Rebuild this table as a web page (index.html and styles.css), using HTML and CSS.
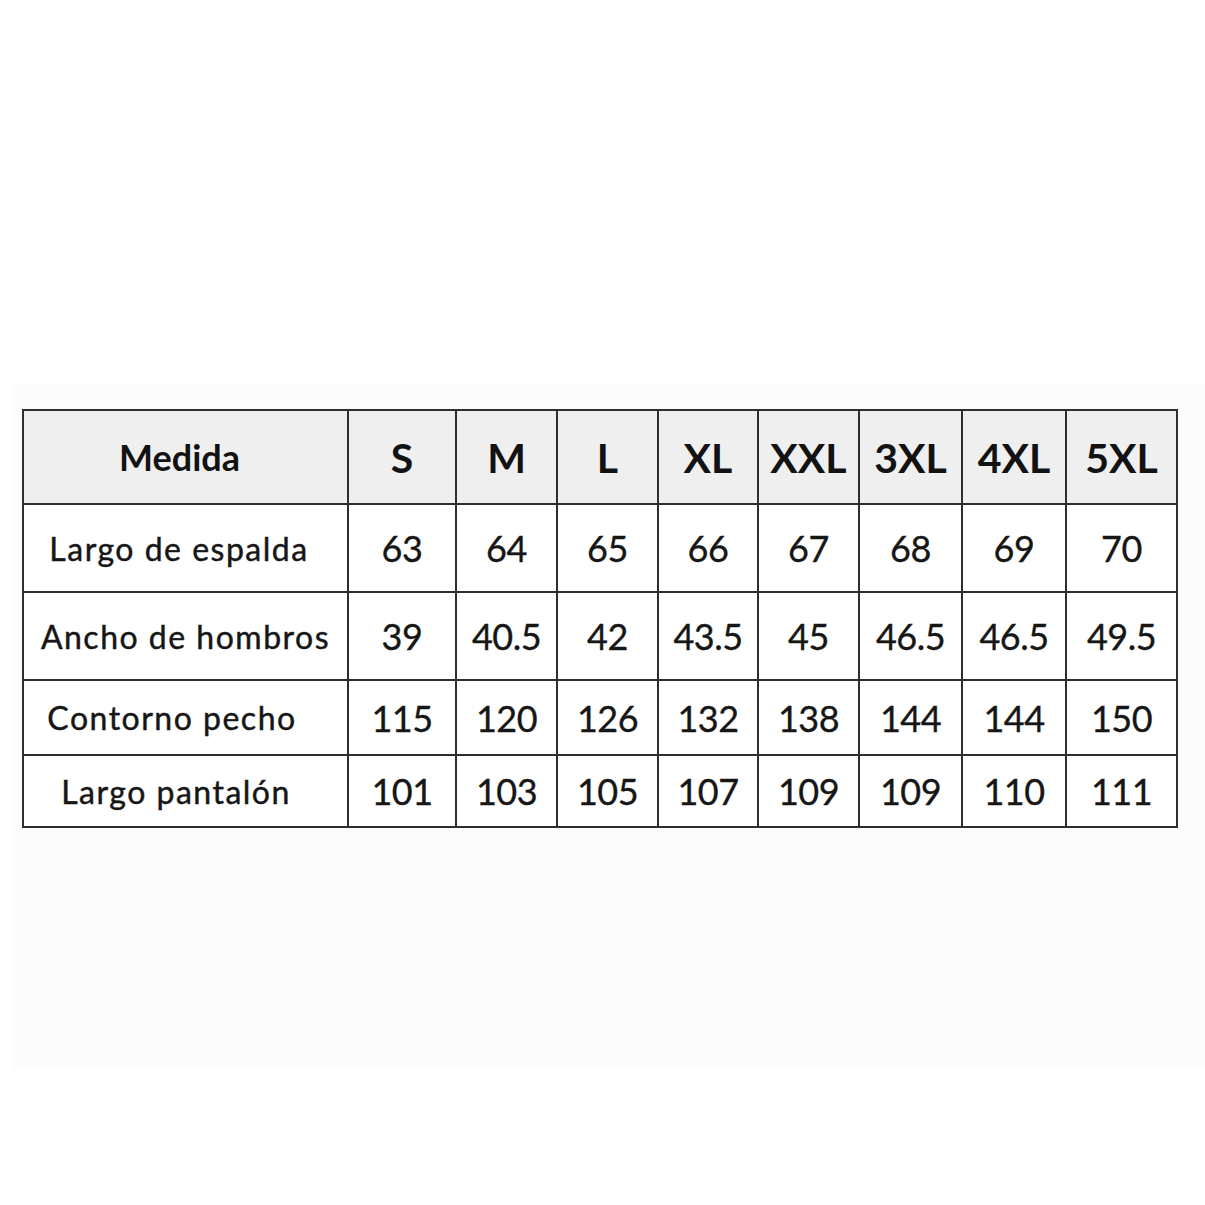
FILE: index.html
```html
<!DOCTYPE html>
<html lang="es">
<head>
<meta charset="utf-8">
<title>Tabla de medidas</title>
<link rel="stylesheet" href="styles.css">
</head>
<body>
<div class="panel">
  <table class="sizes">
    <colgroup>
      <col class="c-label">
      <col class="c-s">
      <col class="c-m">
      <col class="c-l">
      <col class="c-xl">
      <col class="c-xxl">
      <col class="c-3xl">
      <col class="c-4xl">
      <col class="c-5xl">
    </colgroup>
    <thead>
      <tr class="r-head">
        <th class="label-head">Medida</th>
        <th>S</th><th>M</th><th>L</th><th>XL</th><th>XXL</th><th>3XL</th><th>4XL</th><th>5XL</th>
      </tr>
    </thead>
    <tbody>
      <tr class="r-1">
        <td class="label label-back">Largo de espalda</td>
        <td>63</td><td>64</td><td>65</td><td>66</td><td>67</td><td>68</td><td>69</td><td>70</td>
      </tr>
      <tr class="r-2">
        <td class="label label-shoulder">Ancho de hombros</td>
        <td>39</td><td>40.5</td><td>42</td><td>43.5</td><td>45</td><td>46.5</td><td>46.5</td><td>49.5</td>
      </tr>
      <tr class="r-3">
        <td class="label label-chest">Contorno pecho</td>
        <td>115</td><td>120</td><td>126</td><td>132</td><td>138</td><td>144</td><td>144</td><td>150</td>
      </tr>
      <tr class="r-4">
        <td class="label label-pants">Largo pantalón</td>
        <td>101</td><td>103</td><td>105</td><td>107</td><td>109</td><td>109</td><td>110</td><td>111</td>
      </tr>
    </tbody>
  </table>
</div>
</body>
</html>
```

FILE: styles.css
```css
html, body {
  margin: 0;
  padding: 0;
  background: #ffffff;
}

body {
  width: 1205px;
  height: 1205px;
  font-family: Lato, "Open Sans", sans-serif;
  color: #161616;
}

.panel {
  margin: 383px 0 0 12px;
  height: 685px;
  background: #fcfcfc;
  padding: 26px 0 0 10px;
  box-sizing: border-box;
}

.sizes {
  border-collapse: collapse;
  table-layout: fixed;
  width: 1156px;
}

.sizes th,
.sizes td {
  border: 2px solid #2e2e2e;
  text-align: center;
  vertical-align: middle;
  padding: 0;
  white-space: nowrap;
}

.c-label { width: 325px; }
.c-s { width: 108px; }
.c-m { width: 101px; }
.c-l { width: 101px; }
.c-xl { width: 100px; }
.c-xxl { width: 101px; }
.c-3xl { width: 103px; }
.c-4xl { width: 104px; }
.c-5xl { width: 111px; }

.r-head { height: 94px; }
.r-1 { height: 88px; }
.r-2 { height: 88px; }
.r-3 { height: 75px; }
.r-4 { height: 72px; }

.sizes thead th {
  background: #efefef;
  font-weight: 700;
  font-size: 41px;
  color: #121212;
}

.sizes thead th.label-head {
  font-size: 36px;
  padding-right: 12px;
}

.sizes td {
  background: #ffffff;
  font-size: 36px;
  font-weight: 400;
  letter-spacing: -0.5px;
  -webkit-text-stroke: 0.35px #161616;
}

.sizes td.label {
  font-size: 32px;
  letter-spacing: 1.5px;
  -webkit-text-stroke: 0.45px #161616;
}

.sizes td.label-back { padding-right: 13px; }
.sizes td.label-shoulder { padding-right: 0; }
.sizes td.label-chest { padding-right: 27px; }
.sizes td.label-pants { padding-right: 19px; }
```
